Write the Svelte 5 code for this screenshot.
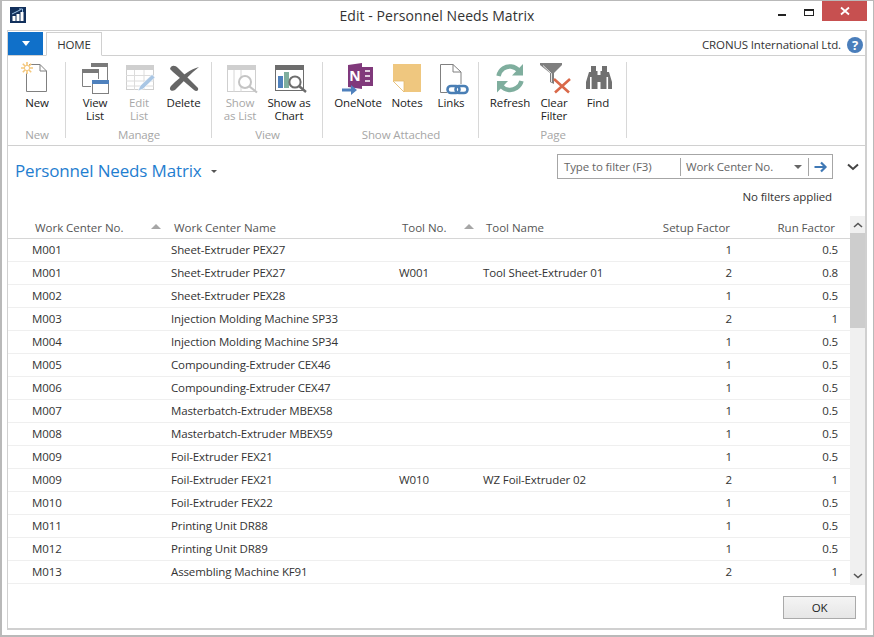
<script lang="ts">
  type Row = { no: string; name: string; tool?: string; toolName?: string; setup: number; run: number };

  const rows: Row[] = [
    { no: 'M001', name: 'Sheet-Extruder PEX27', setup: 1, run: 0.5 },
    { no: 'M001', name: 'Sheet-Extruder PEX27', tool: 'W001', toolName: 'Tool Sheet-Extruder 01', setup: 2, run: 0.8 },
    { no: 'M002', name: 'Sheet-Extruder PEX28', setup: 1, run: 0.5 },
    { no: 'M003', name: 'Injection Molding Machine SP33', setup: 2, run: 1 },
    { no: 'M004', name: 'Injection Molding Machine SP34', setup: 1, run: 0.5 },
    { no: 'M005', name: 'Compounding-Extruder CEX46', setup: 1, run: 0.5 },
    { no: 'M006', name: 'Compounding-Extruder CEX47', setup: 1, run: 0.5 },
    { no: 'M007', name: 'Masterbatch-Extruder MBEX58', setup: 1, run: 0.5 },
    { no: 'M008', name: 'Masterbatch-Extruder MBEX59', setup: 1, run: 0.5 },
    { no: 'M009', name: 'Foil-Extruder FEX21', setup: 1, run: 0.5 },
    { no: 'M009', name: 'Foil-Extruder FEX21', tool: 'W010', toolName: 'WZ Foil-Extruder 02', setup: 2, run: 1 },
    { no: 'M010', name: 'Foil-Extruder FEX22', setup: 1, run: 0.5 },
    { no: 'M011', name: 'Printing Unit DR88', setup: 1, run: 0.5 },
    { no: 'M012', name: 'Printing Unit DR89', setup: 1, run: 0.5 },
    { no: 'M013', name: 'Assembling Machine KF91', setup: 2, run: 1 }
  ];
</script>

<div class="window">
  <header class="titlebar">
    <svg class="appicon" viewBox="0 0 16 16" width="16" height="16">
      <rect width="16" height="16" fill="#12305c" />
      <rect x="2.5" y="9" width="3" height="5" fill="#fff" />
      <rect x="6.5" y="7" width="3" height="7" fill="#fff" />
      <rect x="10.5" y="5" width="3" height="9" fill="#fff" />
      <path d="M2 7 L11 2.5 M9 2 H12.5 V5" fill="none" stroke="#9cc3e6" stroke-width="1" />
    </svg>
    <div class="title">Edit - Personnel Needs Matrix</div>
    <svg class="winctl" viewBox="0 0 70 20" width="70" height="20">
      <rect x="26" y="12" width="8" height="2" fill="#222" />
      <rect x="52.5" y="7.5" width="9" height="6" fill="none" stroke="#222" />
      <rect x="52" y="7" width="10" height="2" fill="#222" />
    </svg>
    <div class="close">
      <svg viewBox="0 0 10 10" width="10" height="10">
        <path d="M1 1.5 L9 8.5 M9 1.5 L1 8.5" stroke="#fff" stroke-width="1.8" />
      </svg>
    </div>
  </header>

  <div class="panel">
    <div class="tabs">
      <div class="filebtn"><span class="caret"></span></div>
      <div class="tab">HOME</div>
      <div class="company">CRONUS International Ltd.</div>
      <svg class="help" viewBox="0 0 16 16" width="16" height="16">
        <circle cx="8" cy="8" r="8" fill="#4a7ebb" />
        <text x="8" y="12.5" text-anchor="middle" class="helpq">?</text>
      </svg>
    </div>

    <div class="ribbon">
      <section class="group g-new">
        <div class="btns">
          <div class="rbtn w60">
            <svg viewBox="0 0 40 36" width="40" height="36">
              <path d="M12 4.5 H23 L29.5 11 V31.5 H9.5 V13" fill="none" stroke="#808080" />
              <path d="M23 4.5 V11 H29.5" fill="none" stroke="#808080" />
              <g stroke="#f4c77c" stroke-width="1.6">
                <path d="M10 2 V14 M4 8 H16 M5.8 3.8 L14.2 12.2 M14.2 3.8 L5.8 12.2" />
              </g>
              <circle cx="10" cy="8" r="2.6" fill="#fff" stroke="#f4c77c" />
            </svg>
            <span>New</span>
          </div>
        </div>
        <div class="glabel">New</div>
      </section>

      <section class="group g-manage">
        <div class="btns">
          <div class="rbtn w44">
            <svg viewBox="0 0 40 36" width="40" height="36">
              <path d="M16.5 6 H32.5 V22" fill="none" stroke="#808080" />
              <rect x="16" y="3" width="17" height="4" fill="#7a7a7a" />
              <path d="M7.5 12 V26.5 H16 M23.5 12 V19" fill="none" stroke="#808080" />
              <rect x="7" y="9" width="17" height="4" fill="#7a7a7a" />
              <rect x="17.5" y="20.5" width="16" height="13" fill="#fff" stroke="#808080" />
              <rect x="17" y="20" width="17" height="4" fill="#4f81bd" />
            </svg>
            <span>View<br />List</span>
          </div>
          <div class="rbtn w44 off">
            <svg viewBox="0 0 40 36" width="40" height="36">
              <rect x="7.5" y="5.5" width="27" height="24" fill="#fff" stroke="#cfcfcf" />
              <rect x="7" y="5" width="28" height="5" fill="#cfcfcf" />
              <path d="M7 15.5 H35 M7 21 H35 M7 26 H35 M15.5 10 V30 M25 10 V30" stroke="#dcdcdc" />
              <path d="M19 31 L21 26 L33 14.5 L36 17.5 L24 29 Z" fill="#a9c6e4" stroke="#fff" stroke-width=".6" />
            </svg>
            <span>Edit<br />List</span>
          </div>
          <div class="rbtn w45">
            <svg viewBox="0 0 40 36" width="40" height="36">
              <path d="M6 9 C7 5 11 5 14 8 L34 28 C35 31 32 32 30 30 L9 12 C8 11 7 10 6 9 Z" fill="#666" />
              <path d="M35 7 C27 9 18 15 7 26 C4 30 8 32 11 30 C19 22 27 13 35 7 Z" fill="#666" />
            </svg>
            <span>Delete</span>
          </div>
        </div>
        <div class="glabel">Manage</div>
      </section>

      <section class="group g-view">
        <div class="btns">
          <div class="rbtn w40 off">
            <svg viewBox="0 0 40 36" width="40" height="36">
              <rect x="7.5" y="5.5" width="28" height="26" fill="#fff" stroke="#cfcfcf" />
              <rect x="7" y="5" width="29" height="5" fill="#cfcfcf" />
              <path d="M14 10 V32 M21 10 V32" stroke="#d6d6d6" />
              <circle cx="25" cy="22" r="6" fill="#fff" stroke="#c4c4c4" stroke-width="2" />
              <path d="M29.5 26.5 L37 32.5" stroke="#c4c4c4" stroke-width="2.2" />
            </svg>
            <span>Show<br />as List</span>
          </div>
          <div class="rbtn w58">
            <svg viewBox="0 0 40 36" width="40" height="36">
              <rect x="6.5" y="5.5" width="28" height="25" fill="#fff" stroke="#6d6d6d" />
              <rect x="6" y="5" width="29" height="5" fill="#6d6d6d" />
              <rect x="9" y="16" width="5" height="12" fill="#4f81bd" />
              <rect x="15" y="12" width="5" height="16" fill="#7fae9e" />
              <circle cx="26" cy="22" r="5.6" fill="#fff" stroke="#6d6d6d" stroke-width="2" />
              <path d="M30 26 L37 32" stroke="#6d6d6d" stroke-width="2.4" />
            </svg>
            <span>Show as<br />Chart</span>
          </div>
        </div>
        <div class="glabel">View</div>
      </section>

      <section class="group g-attached">
        <div class="btns">
          <div class="rbtn w52">
            <svg viewBox="0 0 40 36" width="40" height="36">
              <path d="M10 5 L24 3 V29 L10 27 Z" fill="#80397b" />
              <rect x="24" y="7" width="11" height="19" fill="#80397b" />
              <path d="M27 11 H32 M27 16 H32 M27 21 H32" stroke="#fff" stroke-width="1.6" />
              <text x="17" y="20.5" text-anchor="middle" class="nglyph">N</text>
              <path d="M4 28.5 H13 V25 L19 30 L13 35 V31.5 H4 Z" fill="#4f81bd" />
            </svg>
            <span>OneNote</span>
          </div>
          <div class="rbtn w46">
            <svg viewBox="0 0 40 36" width="40" height="36">
              <path d="M6 4 H34 V32 H17 L6 21 Z" fill="#efc77f" />
              <path d="M6 21 H17 V32 Z" fill="#fff" stroke="#e5b969" stroke-width=".8" />
            </svg>
            <span>Notes</span>
          </div>
          <div class="rbtn w42">
            <svg viewBox="0 0 40 36" width="40" height="36">
              <path d="M9.5 4.5 H22 L30 12 V24 M16 32.5 H9.5 V4.5" fill="none" stroke="#808080" />
              <path d="M22 4.5 V12 H30" fill="none" stroke="#808080" />
              <rect x="16.5" y="26" width="12" height="7" rx="3.5" fill="none" stroke="#4a7fb5" stroke-width="2.6" />
              <rect x="24.5" y="26" width="12" height="7" rx="3.5" fill="none" stroke="#4a7fb5" stroke-width="2.6" />
            </svg>
            <span>Links</span>
          </div>
        </div>
        <div class="glabel">Show Attached</div>
      </section>

      <section class="group g-page">
        <div class="btns">
          <div class="rbtn w44">
            <svg viewBox="0 0 40 36" width="40" height="36">
              <path d="M8.5 16 C10 9 16 6 21 6.5 C25 7 27.5 9 29 11" fill="none" stroke="#7fae9e" stroke-width="4.4" />
              <path d="M33 4 V15.5 H22 Z" fill="#7fae9e" />
              <path d="M31.5 21 C30 27 24 30.5 19 30 C15 29.5 12.5 27.5 11 25.5" fill="none" stroke="#7fae9e" stroke-width="4.4" />
              <path d="M7 32.5 V21 H18 Z" fill="#7fae9e" />
            </svg>
            <span>Refresh</span>
          </div>
          <div class="rbtn w44">
            <svg viewBox="0 0 40 36" width="40" height="36">
              <path d="M6 3 H28 V5 L20 13 V24 L16 22 V13 L6 5 Z" fill="#7f7f7f" />
              <path d="M9 5.5 L17.5 13.5 V22" fill="none" stroke="#fff" stroke-width=".8" />
              <path d="M20 19 L35 32.5 M36 19 L21 32.5" stroke="#d9694a" stroke-width="2.6" />
            </svg>
            <span>Clear<br />Filter</span>
          </div>
          <div class="rbtn w44">
            <svg viewBox="0 0 40 36" width="40" height="36">
              <path d="M13 6 H18 V11 H19.5 V29 H8 V22 L11 12 H13 Z" fill="#707070" />
              <path d="M24 6 H29 V12 H31 L34 22 V29 H22.5 V11 H24 Z" fill="#707070" />
              <rect x="19" y="15" width="4" height="7" fill="#707070" />
              <rect x="12" y="17" width="1.6" height="12" fill="#fff" />
              <rect x="28.5" y="17" width="1.6" height="12" fill="#fff" />
            </svg>
            <span>Find</span>
          </div>
        </div>
        <div class="glabel">Page</div>
      </section>
    </div>

    <div class="pagehead">
      <div class="pagetitle">
        <h1>Personnel Needs Matrix</h1>
        <span class="minicaret"></span>
      </div>
      <div class="filterside">
        <div class="filterbox">
          <div class="f-input">Type to filter (F3)</div>
          <div class="f-field">Work Center No.<span class="fieldcaret"></span></div>
          <div class="f-go">
            <svg viewBox="0 0 14 12" width="14" height="12">
              <path d="M0.5 6 H11 M7 1.5 L11.5 6 L7 10.5" fill="none" stroke="#3f78b5" stroke-width="2.2" />
            </svg>
          </div>
        </div>
        <svg class="chev" viewBox="0 0 12 8" width="12" height="8">
          <path d="M1 1.5 L6 6 L11 1.5" fill="none" stroke="#444" stroke-width="2" />
        </svg>
      </div>
    </div>
    <div class="nofilters">No filters applied</div>

    <div class="gridwrap">
      <div class="grid">
        <div class="row head">
          <div class="c c1"><span>Work Center No.</span><i class="sort"></i></div>
          <div class="c c2">Work Center Name</div>
          <div class="c c3"><span>Tool No.</span><i class="sort"></i></div>
          <div class="c c4">Tool Name</div>
          <div class="c c5">Setup Factor</div>
          <div class="c c6">Run Factor</div>
        </div>
        {#each rows as r}
          <div class="row">
            <div class="c c1">{r.no}</div>
            <div class="c c2">{r.name}</div>
            <div class="c c3">{r.tool ?? ''}</div>
            <div class="c c4">{r.toolName ?? ''}</div>
            <div class="c c5">{r.setup}</div>
            <div class="c c6">{r.run}</div>
          </div>
        {/each}
      </div>
      <div class="scrollbar">
        <svg viewBox="0 0 10 6" width="10" height="6"><path d="M1 5 L5 1.5 L9 5" fill="none" stroke="#555" stroke-width="1.6" /></svg>
        <div class="thumb"></div>
        <div class="spacer"></div>
        <svg viewBox="0 0 10 6" width="10" height="6"><path d="M1 1 L5 4.5 L9 1" fill="none" stroke="#555" stroke-width="1.6" /></svg>
      </div>
    </div>

    <div class="footer">
      <div class="okbtn">OK</div>
    </div>
  </div>
</div>

<style>
  :global(body) {
    margin: 0;
    background: #fff;
  }

  .window {
    box-sizing: border-box;
    width: 874px;
    height: 637px;
    border: 1px solid #b9b9b9;
    border-left-width: 2px;
    border-bottom-width: 2px;
    background: #fff;
    font-family: "Open Sans", "Liberation Sans", sans-serif;
    font-size: 11.5px;
    letter-spacing: -0.12px;
    color: #333;
    display: flex;
    flex-direction: column;
    overflow: hidden;
  }

  .titlebar {
    height: 29px;
    flex: none;
    display: flex;
    align-items: flex-start;
    position: relative;
  }

  .appicon {
    margin: 6px 0 0 8px;
  }

  .title {
    position: absolute;
    left: 0;
    right: 1px;
    top: 5px;
    text-align: center;
    font-size: 14px;
    letter-spacing: 0.07px;
    color: #333;
  }

  .winctl {
    margin: 1px 0 0 auto;
  }

  .close {
    width: 45px;
    height: 20px;
    margin-right: 6px;
    background: #c75050;
    display: flex;
    align-items: center;
    justify-content: center;
  }

  .panel {
    box-sizing: border-box;
    width: 860px;
    height: 600px;
    margin-left: 5px;
    border: 1px solid #d0d0d0;
    border-right-width: 2px;
    border-bottom-width: 2px;
    display: flex;
    flex-direction: column;
  }

  .tabs {
    height: 23px;
    flex: none;
    display: flex;
    align-items: stretch;
    padding-top: 1px;
    border-bottom: 1px solid #d0d0d0;
  }

  .filebtn {
    width: 35px;
    background: #1070c9;
    display: flex;
    align-items: center;
    justify-content: center;
  }

  .caret {
    width: 0;
    height: 0;
    border-left: 4px solid transparent;
    border-right: 4px solid transparent;
    border-top: 5px solid #fff;
  }

  .tab {
    box-sizing: border-box;
    width: 56px;
    margin-left: 3px;
    margin-bottom: -1px;
    border: 1px solid #d0d0d0;
    border-bottom: 1px solid #fff;
    background: #fff;
    text-align: center;
    line-height: 23px;
    color: #333;
  }

  .company {
    margin-left: auto;
    line-height: 26px;
  }

  .help {
    margin: 5px 2px 0 6px;
  }

  .helpq {
    fill: #fff;
    font-size: 13px;
    font-weight: 700;
  }

  .ribbon {
    height: 89px;
    flex: none;
    display: flex;
    border-bottom: 1px solid #d0d0d0;
  }

  .group {
    position: relative;
    box-sizing: border-box;
    display: flex;
    flex-direction: column;
    padding-top: 4px;
  }

  .group::after {
    content: "";
    position: absolute;
    right: 0;
    top: 6px;
    bottom: 7px;
    width: 1px;
    background: #d8d8d8;
  }

  .g-new { width: 58px; }
  .g-manage { width: 146px; }
  .g-manage .btns { padding-left: 7px; }
  .g-view { width: 111px; }
  .g-view .btns { padding-left: 8px; }
  .g-attached { width: 156px; }
  .g-attached .btns { padding-left: 9px; }
  .g-page { width: 148px; }
  .g-page .btns { padding-left: 9px; }

  .btns {
    display: flex;
    height: 68px;
  }

  .rbtn {
    display: flex;
    flex-direction: column;
    align-items: center;
    text-align: center;
    line-height: 13px;
    color: #222;
  }

  .rbtn svg {
    flex: none;
    display: block;
  }

  .rbtn.off {
    color: #a8a8a8;
  }

  .w60 { width: 60px; }
  .w58 { width: 58px; }
  .w52 { width: 52px; }
  .w46 { width: 46px; }
  .w45 { width: 45px; }
  .w44 { width: 44px; }
  .w42 { width: 42px; }
  .w40 { width: 40px; }

  .nglyph {
    fill: #fff;
    font-size: 14px;
    font-weight: 700;
  }

  .glabel {
    text-align: center;
    color: #a6a6a6;
    line-height: 14px;
  }

  .pagehead {
    flex: none;
    height: 31px;
    padding-top: 8px;
    display: flex;
    justify-content: space-between;
    align-items: flex-start;
  }

  .pagetitle {
    display: flex;
    align-items: center;
    margin: 4px 0 0 7px;
    gap: 9px;
  }

  h1 {
    margin: 0;
    font-size: 17px;
    letter-spacing: -0.15px;
    font-weight: 400;
    color: #1f7ed0;
    line-height: 26px;
  }

  .minicaret {
    width: 0;
    height: 0;
    border-left: 3px solid transparent;
    border-right: 3px solid transparent;
    border-top: 3px solid #555;
  }

  .fieldcaret {
    width: 0;
    height: 0;
    border-left: 4px solid transparent;
    border-right: 4px solid transparent;
    border-top: 4px solid #666;
  }

  .filterside {
    display: flex;
    align-items: center;
  }

  .filterbox {
    box-sizing: border-box;
    width: 276px;
    height: 25px;
    border: 1px solid #a6a6a6;
    display: flex;
    align-items: center;
    color: #666;
  }

  .f-input {
    width: 122px;
    padding-left: 6px;
    box-sizing: border-box;
    white-space: nowrap;
  }

  .f-field {
    box-sizing: border-box;
    width: 129px;
    height: 18px;
    line-height: 19px;
    padding: 0 6px 0 5px;
    border-left: 1px solid #a6a6a6;
    border-right: 1px solid #a6a6a6;
    display: flex;
    align-items: center;
    justify-content: space-between;
    white-space: nowrap;
  }

  .f-go {
    flex: 1;
    display: flex;
    justify-content: center;
  }

  .chev {
    margin: 0 6px 0 14px;
  }

  .nofilters {
    flex: none;
    height: 24px;
    line-height: 24px;
    text-align: right;
    padding-right: 33px;
    color: #333;
  }

  .gridwrap {
    flex: none;
    margin-top: 8px;
    height: 370px;
    display: flex;
    align-items: flex-start;
  }

  .grid {
    width: 842px;
    overflow: hidden;
    height: 370px;
  }

  .row {
    display: flex;
    height: 23px;
    box-sizing: border-box;
    border-bottom: 1px solid #efefef;
    line-height: 22px;
    color: #333;
  }

  .row.head {
    height: 22px;
    border-bottom: 1px solid #d6d6d6;
    color: #555;
    letter-spacing: -0.03px;
  }

  .c { flex: none; box-sizing: border-box; white-space: nowrap; }
  .c1 { width: 163px; padding-left: 24px; }
  .c2 { width: 228px; }
  .c3 { width: 84px; }
  .c4 { width: 137px; }
  .c5 { width: 112px; text-align: right; }
  .c6 { width: 106px; text-align: right; }

  .head .c1 { padding-left: 27px; padding-right: 10px; display: flex; justify-content: space-between; align-items: center; }
  .head .c2 { padding-left: 3px; }
  .head .c3 { padding-left: 3px; padding-right: 9px; display: flex; justify-content: space-between; align-items: center; }
  .head .c4 { padding-left: 3px; }
  .head .c5 { padding-right: 2px; }
  .head .c6 { padding-right: 3px; }

  .sort {
    width: 0;
    height: 0;
    border-left: 5px solid transparent;
    border-right: 5px solid transparent;
    border-bottom: 5px solid #a6a6a6;
    margin-top: -3px;
  }

  .scrollbar {
    width: 15px;
    height: 369px;
    margin-top: -1px;
    background: #f0f0f0;
    display: flex;
    flex-direction: column;
    align-items: center;
    padding-top: 6px;
    padding-bottom: 6px;
    box-sizing: border-box;
  }

  .thumb {
    align-self: stretch;
    height: 95px;
    margin-top: 5px;
    background: #cdcdcd;
    flex: none;
  }

  .spacer { flex: 1; }

  .footer {
    flex: 1;
    display: flex;
    justify-content: flex-end;
    align-items: flex-start;
    padding: 9px 9px 0 0;
  }

  .okbtn {
    box-sizing: border-box;
    width: 73px;
    height: 23px;
    border: 1px solid #aaa;
    background: linear-gradient(#f4f4f4, #e6e6e6);
    text-align: center;
    line-height: 21px;
    color: #222;
  }
</style>
